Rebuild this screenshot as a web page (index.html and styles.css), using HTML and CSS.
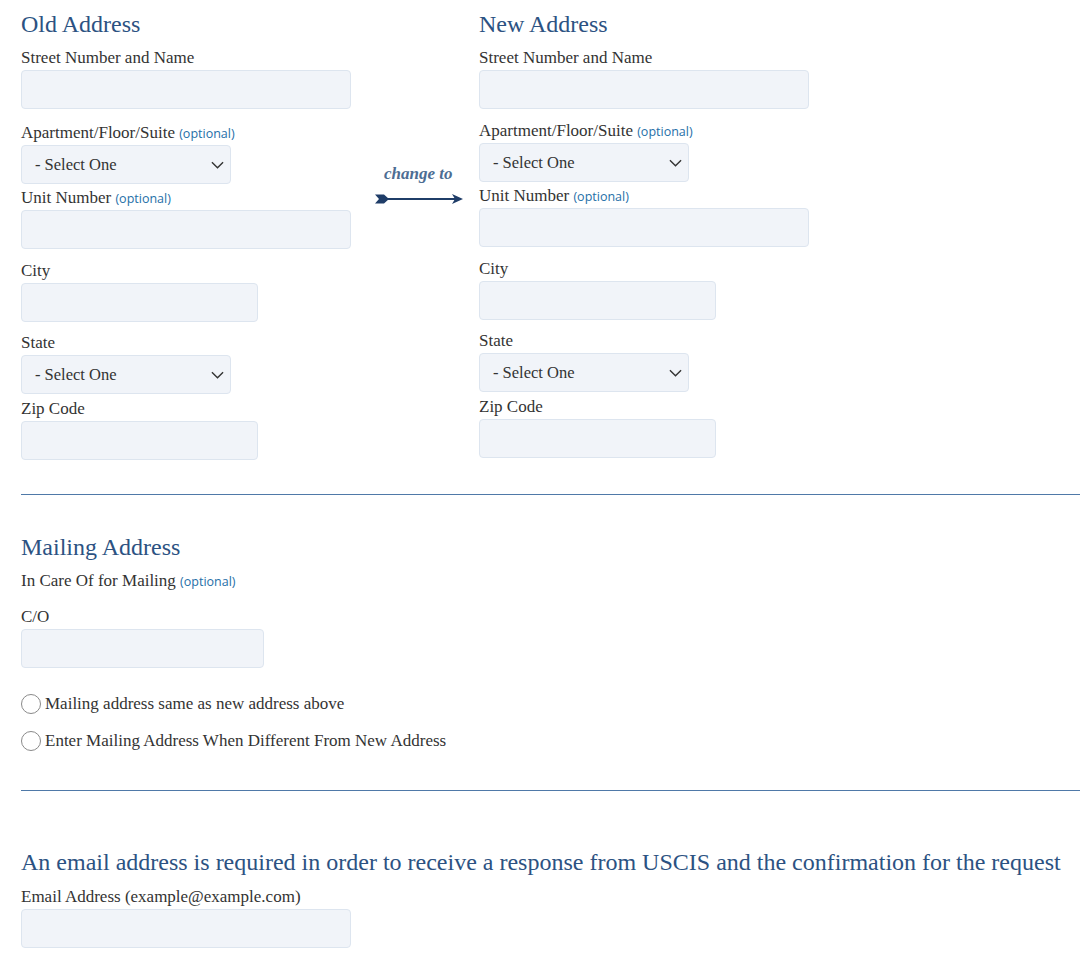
FILE: index.html
```html
<!DOCTYPE html>
<html lang="en">
<head>
    <meta charset="UTF-8">
    <meta name="viewport" content="width=device-width, initial-scale=1.0">
    <title>Change of Address</title>
    <link rel="stylesheet" href="styles.css">
</head>
<body>
    <form class="page">
        <div class="address-row">
            <div class="address-col old">
                <h2>Old Address</h2>
                <label class="field-label">Street Number and Name</label>
                <input type="text" class="text-input wide street">

                <label class="field-label">Apartment/Floor/Suite <span class="optional">(optional)</span></label>
                <div class="select-wrap">
                    <select class="select-input"><option>- Select One</option></select>
                    <svg class="chevron" viewBox="0 0 14 8"><path d="M1 1l6 6 6-6" fill="none" stroke="#333" stroke-width="1.5"/></svg>
                </div>

                <label class="field-label">Unit Number <span class="optional">(optional)</span></label>
                <input type="text" class="text-input wide">

                <label class="field-label">City</label>
                <input type="text" class="text-input medium">

                <label class="field-label">State</label>
                <div class="select-wrap">
                    <select class="select-input"><option>- Select One</option></select>
                    <svg class="chevron" viewBox="0 0 14 8"><path d="M1 1l6 6 6-6" fill="none" stroke="#333" stroke-width="1.5"/></svg>
                </div>

                <label class="field-label">Zip Code</label>
                <input type="text" class="text-input medium">
            </div>

            <div class="change-to">
                <span>change to</span>
                <svg class="arrow" viewBox="0 0 88 12" width="88" height="12">
                    <polygon points="0,1.5 9,1.5 14,6 9,10.5 0,10.5 4,6" fill="#1f3d68"/>
                    <line x1="12" y1="6" x2="82" y2="6" stroke="#1f3d68" stroke-width="2"/>
                    <polygon points="77,1 88,6 77,11 80,6" fill="#1f3d68"/>
                </svg>
            </div>

            <div class="address-col new">
                <h2>New Address</h2>
                <label class="field-label">Street Number and Name</label>
                <input type="text" class="text-input wide street">

                <label class="field-label">Apartment/Floor/Suite <span class="optional">(optional)</span></label>
                <div class="select-wrap">
                    <select class="select-input"><option>- Select One</option></select>
                    <svg class="chevron" viewBox="0 0 14 8"><path d="M1 1l6 6 6-6" fill="none" stroke="#333" stroke-width="1.5"/></svg>
                </div>

                <label class="field-label">Unit Number <span class="optional">(optional)</span></label>
                <input type="text" class="text-input wide">

                <label class="field-label">City</label>
                <input type="text" class="text-input medium">

                <label class="field-label">State</label>
                <div class="select-wrap">
                    <select class="select-input"><option>- Select One</option></select>
                    <svg class="chevron" viewBox="0 0 14 8"><path d="M1 1l6 6 6-6" fill="none" stroke="#333" stroke-width="1.5"/></svg>
                </div>

                <label class="field-label">Zip Code</label>
                <input type="text" class="text-input medium">
            </div>
        </div>

        <hr class="divider">

        <div class="mailing">
            <h2>Mailing Address</h2>
            <p class="care-of">In Care Of for Mailing <span class="optional">(optional)</span></p>
            <label class="field-label">C/O</label>
            <input type="text" class="text-input co">

            <label class="radio-row first">
                <input type="radio" name="mailing" class="radio">
                Mailing address same as new address above
            </label>
            <label class="radio-row">
                <input type="radio" name="mailing" class="radio">
                Enter Mailing Address When Different From New Address
            </label>
        </div>

        <hr class="divider">

        <div class="email">
            <h2>An email address is required in order to receive a response from USCIS and the confirmation for the request</h2>
            <label class="field-label">Email Address (example@example.com)</label>
            <input type="email" class="text-input wide">
        </div>
    </form>
</body>
</html>
```

FILE: styles.css
```css
body {
    margin: 0;
    padding: 0;
    background: #fff;
    font-family: "Liberation Serif", Georgia, serif;
    color: #333;
}

.page {
    padding: 10px 0 20px 21px;
}

h2 {
    margin: 0;
    font-size: 24px;
    line-height: 28px;
    font-weight: normal;
    color: #2c5282;
    white-space: nowrap;
}

.address-row {
    display: flex;
}

.address-col {
    display: flex;
    flex-direction: column;
    align-items: flex-start;
}

.address-col.old {
    width: 354px;
}

.field-label {
    display: block;
    font-size: 17px;
    line-height: 20px;
    margin-bottom: 2px;
}

.address-col h2 + .field-label {
    margin-top: 10px;
}

.optional {
    font-family: "Open Sans", sans-serif;
    font-size: 12.5px;
    line-height: 1;
    color: #1f6fa8;
}

.text-input {
    box-sizing: border-box;
    height: 39px;
    margin: 0 0 11.5px;
    padding: 0 12px;
    background: #f1f4f9;
    border: 1px solid #dde5ef;
    border-radius: 4px;
    font-family: inherit;
    font-size: 16px;
}

.text-input.wide {
    width: 330px;
}

.text-input.medium {
    width: 237px;
}

.text-input.co {
    width: 243px;
    margin-bottom: 0;
}

.new .text-input.street {
    margin-bottom: 11.5px;
}

/* the old column runs two pixels lower from the apartment field on */
.old .text-input.street {
    margin-bottom: 13.5px;
}

.select-wrap {
    position: relative;
    width: 210px;
    margin-bottom: 4.5px;
}

.select-input {
    appearance: none;
    -webkit-appearance: none;
    display: block;
    box-sizing: border-box;
    width: 100%;
    height: 39px;
    padding: 0 0 0 13px;
    background: #f1f4f9;
    border: 1px solid #dde5ef;
    border-radius: 4px;
    font-family: inherit;
    font-size: 16.5px;
    color: #333;
}

.chevron {
    position: absolute;
    right: 7px;
    top: 16px;
    width: 13px;
    height: 8px;
    pointer-events: none;
}

.change-to {
    width: 104px;
    display: flex;
    flex-direction: column;
    align-items: flex-start;
    padding-top: 153px;
}

.change-to span {
    margin-left: 9px;
    font-size: 17px;
    line-height: 22px;
    font-style: italic;
    font-weight: bold;
    color: #4d6d93;
}

.change-to .arrow {
    margin-top: 8px;
}

.divider {
    height: 0;
    margin: 22.5px 0 0;
    border: 0;
    border-top: 1px solid #4f79a8;
}

.mailing {
    padding-top: 38px;
}

.care-of {
    margin: 10px 0 16px;
    font-size: 17px;
    line-height: 20px;
}

.radio-row {
    display: flex;
    align-items: center;
    gap: 4px;
    font-size: 17px;
    line-height: 22px;
}

.radio-row.first {
    margin-top: 25px;
    margin-bottom: 15px;
}

.radio {
    appearance: none;
    -webkit-appearance: none;
    box-sizing: border-box;
    width: 20px;
    height: 20px;
    margin: 0;
    border: 1.5px solid #8a8a8a;
    border-radius: 50%;
    background: #fff;
}

.mailing + .divider {
    margin-top: 38px;
}

.email {
    padding-top: 57px;
}

.email .field-label {
    margin-top: 11px;
}

.email .text-input {
    margin-bottom: 0;
}
```
